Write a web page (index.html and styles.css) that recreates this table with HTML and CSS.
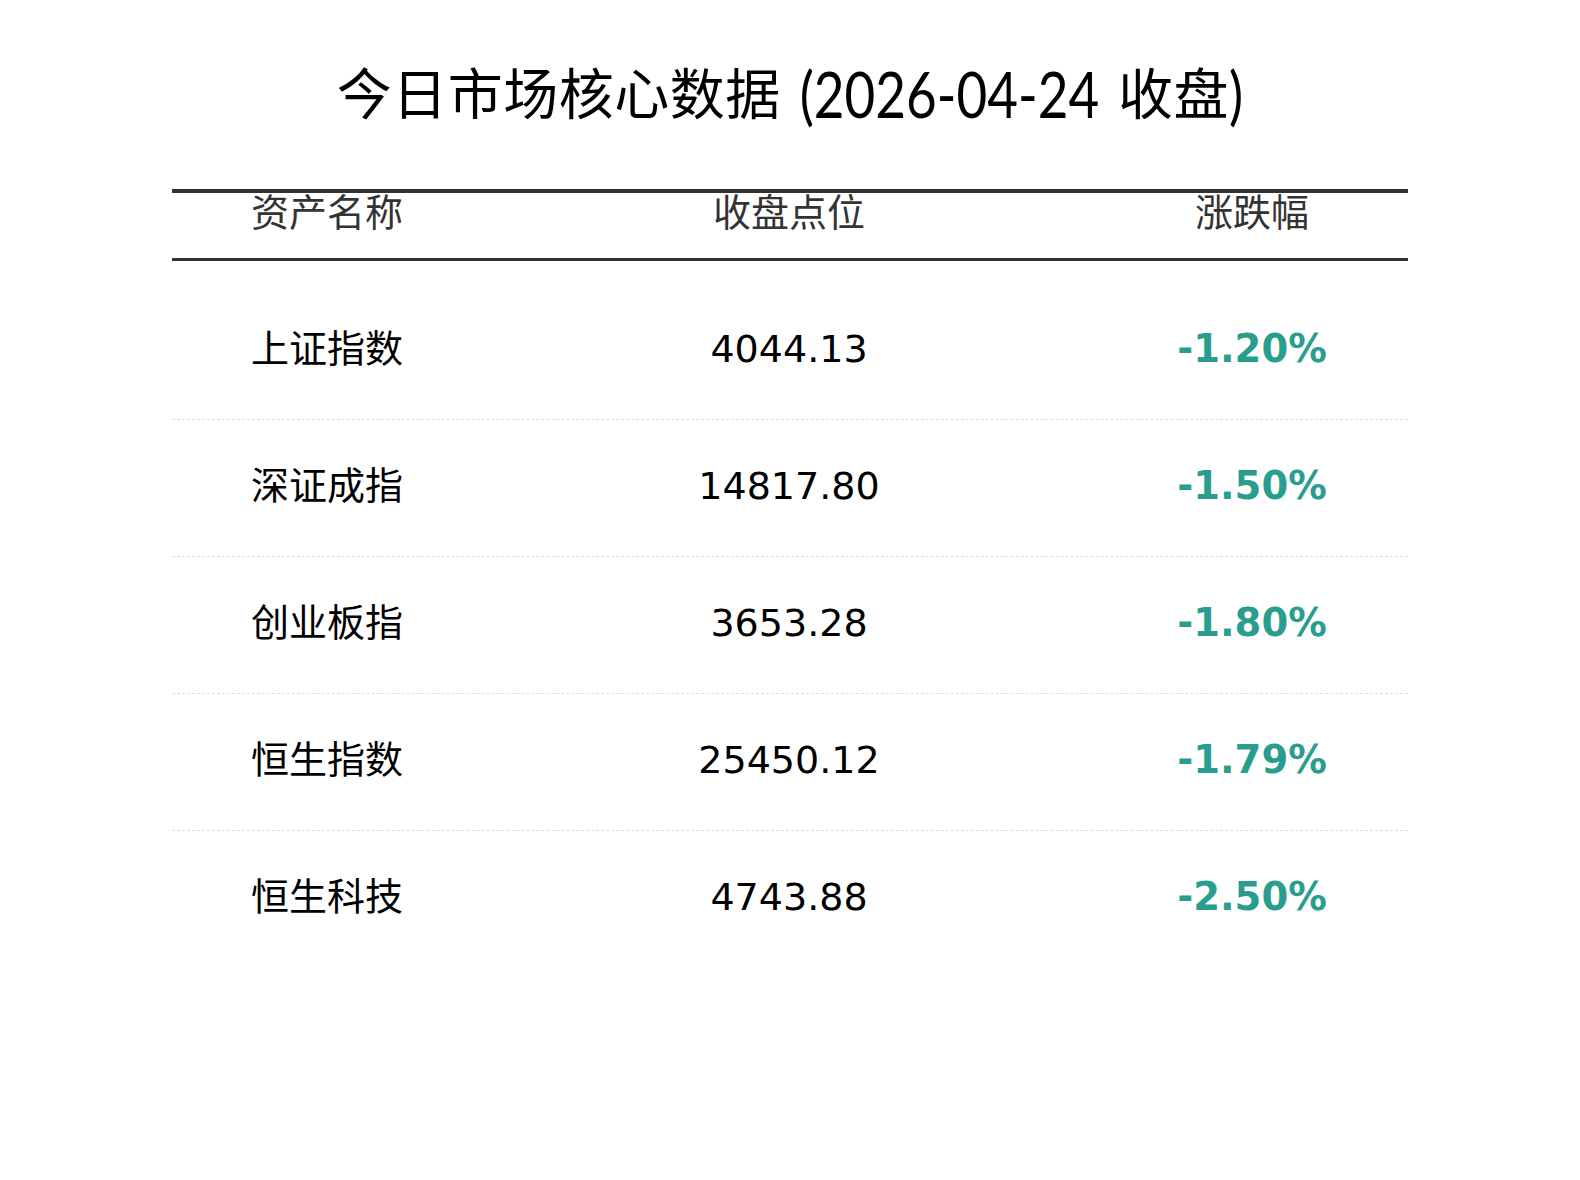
FILE: index.html
```html
<!DOCTYPE html>
<html lang="zh-CN">
<head>
<meta charset="utf-8">
<title>今日市场核心数据</title>
<link rel="stylesheet" href="styles.css">
</head>
<body>
<div class="page">
  <h1 class="title">今日市场核心数据 <span class="title-date">(2026-04-24</span> 收盘<span class="title-date">)</span></h1>
  <div class="table">
    <div class="thead">
      <div class="cell">资产名称</div>
      <div class="cell">收盘点位</div>
      <div class="cell">涨跌幅</div>
    </div>
    <div class="tbody">
      <div class="row">
        <div class="cell">上证指数</div>
        <div class="cell">4044.13</div>
        <div class="cell change">-1.20%</div>
      </div>
      <div class="row">
        <div class="cell">深证成指</div>
        <div class="cell">14817.80</div>
        <div class="cell change">-1.50%</div>
      </div>
      <div class="row">
        <div class="cell">创业板指</div>
        <div class="cell">3653.28</div>
        <div class="cell change">-1.80%</div>
      </div>
      <div class="row">
        <div class="cell">恒生指数</div>
        <div class="cell">25450.12</div>
        <div class="cell change">-1.79%</div>
      </div>
      <div class="row">
        <div class="cell">恒生科技</div>
        <div class="cell">4743.88</div>
        <div class="cell change">-2.50%</div>
      </div>
    </div>
  </div>
</div>
</body>
</html>
```

FILE: styles.css
```css
html, body {
  margin: 0;
  padding: 0;
  background: #ffffff;
}

.page {
  width: 1236px;
  margin: 0 auto;
}

.title {
  margin: 0;
  padding-top: 55px;
  height: 70px;
  line-height: 70px;
  font-family: "Noto Sans CJK SC", sans-serif;
  font-size: 55px;
  font-weight: 400;
  letter-spacing: 0.5px;
  word-spacing: 6px;
  color: #000;
  text-align: center;
  white-space: nowrap;
}

.title-date {
  display: inline-block;
  font-family: "Lato", "Noto Sans CJK SC", sans-serif;
  font-size: 53px;
  letter-spacing: 0;
  transform: scaleY(1.2);
}

.table {
  margin-top: 64px;
  font-family: "DejaVu Sans", "Noto Sans CJK SC", sans-serif;
  font-size: 38px;
}

.thead,
.row {
  display: grid;
  grid-template-columns: 310fr 614fr 312fr;
}

.cell {
  text-align: center;
  line-height: 38px;
  white-space: nowrap;
}

.thead {
  border-top: 4px solid #333;
  border-bottom: 3px solid #333;
  padding-top: 1px;
  padding-bottom: 26px;
  color: #333;
}

.tbody {
  padding-top: 22px;
}

.row {
  height: 136px;
  box-sizing: content-box;
  align-items: center;
  color: #000;
  border-bottom: 1px dashed #dedede;
}

.row .cell {
  position: relative;
  top: -2px;
}

.row:last-child {
  border-bottom: none;
}

.change {
  color: #2a9d8f;
  font-weight: 700;
  font-size: 38.5px;
}
```
